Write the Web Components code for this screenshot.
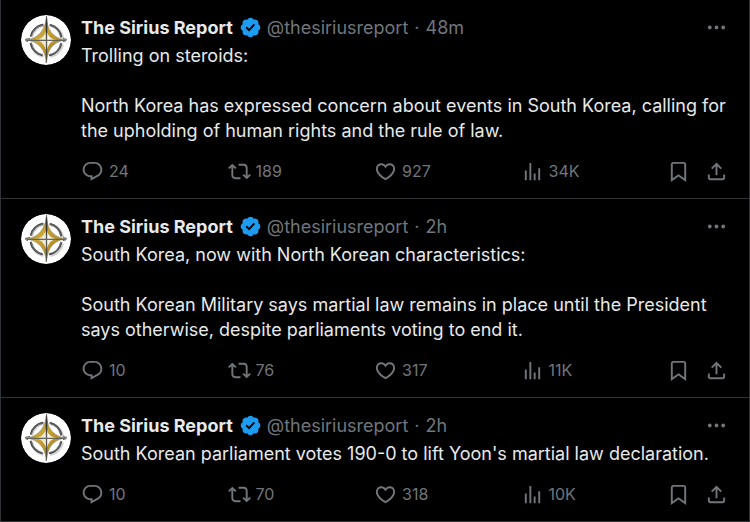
<!DOCTYPE html>
<html lang="en">
<head>
<meta charset="utf-8">
<title>The Sirius Report</title>
<style>
  html { background: #000; }
  body { margin: 0; background: #000; color: #e7e9ea; font: 18px/25px Inter, "Liberation Sans", sans-serif; }
</style>
</head>
<body>
<post-timeline>
  <post-card handle="@thesiriusreport" age="48m" replies="24" reposts="189" likes="927" views="34K">
    <span slot="name">The Sirius Report</span>
    <p>Trolling on steroids:</p>
    <p>North Korea has expressed concern about events in South Korea, calling for the upholding of human rights and the rule of law.</p>
  </post-card>
  <post-card handle="@thesiriusreport" age="2h" replies="10" reposts="76" likes="317" views="11K">
    <span slot="name">The Sirius Report</span>
    <p>South Korea, now with North Korean characteristics:</p>
    <p>South Korean Military says martial law remains in place until the President says otherwise, despite parliaments voting to end it.</p>
  </post-card>
  <post-card handle="@thesiriusreport" age="2h" replies="10" reposts="70" likes="318" views="10K">
    <span slot="name">The Sirius Report</span>
    <p>South Korean parliament votes 190-0 to lift Yoon's martial law declaration.</p>
  </post-card>
</post-timeline>

<script>
const ICONS = {
  reply: 'M1.751 10c0-4.42 3.584-8 8.005-8h4.366c4.49 0 8.129 3.64 8.129 8.13 0 2.96-1.607 5.68-4.196 7.11l-8.054 4.46v-3.69h-.067c-4.49.1-8.183-3.51-8.183-8.01zm8.005-6c-3.317 0-6.005 2.69-6.005 6 0 3.37 2.77 6.08 6.138 6.01l.351-.01h1.761v2.3l5.087-2.81c1.951-1.08 3.163-3.13 3.163-5.36 0-3.39-2.744-6.13-6.129-6.13H9.756z',
  repost: 'M4.5 3.88l4.432 4.14-1.364 1.46L5.5 7.55V16c0 1.1.896 2 2 2H13v2H7.5c-2.209 0-4-1.79-4-4V7.55L1.432 9.48.068 8.02 4.5 3.88zM16.5 6H11V4h5.5c2.209 0 4 1.79 4 4v8.45l2.068-1.93 1.364 1.46-4.432 4.14-4.432-4.14 1.364-1.46 2.068 1.93V8c0-1.1-.896-2-2-2z',
  like: 'M16.697 5.5c-1.222-.06-2.679.51-3.89 2.16l-.805 1.09-.806-1.09C9.984 6.01 8.526 5.44 7.304 5.5c-1.243.07-2.349.78-2.91 1.91-.552 1.12-.633 2.78.479 4.82 1.074 1.97 3.257 4.27 7.129 6.61 3.87-2.34 6.052-4.64 7.126-6.61 1.111-2.04 1.03-3.7.477-4.82-.561-1.13-1.666-1.84-2.908-1.91zm4.187 7.69c-1.351 2.48-4.001 5.12-8.379 7.67l-.503.3-.504-.3c-4.379-2.55-7.029-5.19-8.382-7.67-1.36-2.5-1.41-4.86-.514-6.67.887-1.79 2.647-2.91 4.601-3.01 1.651-.09 3.368.56 4.798 2.01 1.429-1.45 3.146-2.1 4.796-2.01 1.954.1 3.714 1.22 4.601 3.01.896 1.81.846 4.17-.514 6.67z',
  views: 'M8.75 21V3h2v18h-2zM18 21V8.5h2V21h-2zM4 21l.004-10h2L6 21H4zm9.248 0v-7h2v7h-2z',
  bookmark: 'M4 4.5C4 3.12 5.119 2 6.5 2h11C18.881 2 20 3.12 20 4.5v18.44l-8-5.71-8 5.71V4.5zM6.5 4c-.276 0-.5.22-.5.5v14.56l6-4.29 6 4.29V4.5c0-.28-.224-.5-.5-.5h-11z',
  share: 'M12 2.59l5.7 5.7-1.41 1.42L13 6.41V16h-2V6.41l-3.3 3.3-1.41-1.42L12 2.59zM21 15l-.02 3.51c0 1.38-1.12 2.49-2.5 2.49H5.5C4.11 21 3 19.88 3 18.5V15h2v3.5c0 .28.22.5.5.5h12.98c.28 0 .5-.22.5-.5L19 15h2z',
  more: 'M3 12c0-1.1.9-2 2-2s2 .9 2 2-.9 2-2 2-2-.9-2-2zm9 2c1.1 0 2-.9 2-2s-.9-2-2-2-2 .9-2 2 .9 2 2 2zm7 0c1.1 0 2-.9 2-2s-.9-2-2-2-2 .9-2 2 .9 2 2 2z'
};

class PostIcon extends HTMLElement {
  connectedCallback() {
    this.attachShadow({ mode: 'open' }).innerHTML = `
      <style>
        :host { display: block; width: 23px; height: 23px; flex: none; }
        svg { display: block; width: 100%; height: 100%; fill: currentColor; }
      </style>
      <svg viewBox="0 0 24 24" aria-hidden="true"><path d="${ICONS[this.getAttribute('name')]}"/></svg>`;
  }
}
customElements.define('post-icon', PostIcon);

class VerifiedBadge extends HTMLElement {
  connectedCallback() {
    this.attachShadow({ mode: 'open' }).innerHTML = `
      <style>
        :host { display: block; width: 23px; height: 23px; flex: none; }
        svg { display: block; width: 100%; height: 100%; fill: #1d9bf0; }
      </style>
      <svg viewBox="0 0 22 22" role="img" aria-label="Verified account"><path d="M20.396 11c-.018-.646-.215-1.275-.57-1.816-.354-.54-.852-.972-1.438-1.246.223-.607.27-1.264.14-1.897-.131-.634-.437-1.218-.882-1.687-.47-.445-1.053-.75-1.687-.882-.633-.13-1.29-.083-1.897.14-.273-.587-.704-1.086-1.245-1.44S11.647 1.62 11 1.604c-.646.017-1.273.213-1.813.568s-.969.854-1.24 1.44c-.608-.223-1.267-.272-1.902-.14-.635.13-1.22.436-1.69.882-.445.47-.749 1.055-.878 1.688-.13.633-.08 1.29.144 1.896-.587.274-1.087.705-1.443 1.245-.356.54-.555 1.17-.574 1.817.02.647.218 1.276.574 1.817.356.54.856.972 1.443 1.245-.224.606-.274 1.263-.144 1.896.13.634.433 1.218.877 1.688.47.443 1.054.747 1.687.878.633.132 1.29.084 1.897-.136.274.586.705 1.084 1.246 1.439.54.354 1.17.551 1.816.569.647-.016 1.276-.213 1.817-.567s.972-.854 1.245-1.44c.604.239 1.266.296 1.903.164.636-.132 1.22-.447 1.68-.907.46-.46.776-1.044.908-1.681s.075-1.299-.165-1.903c.586-.274 1.084-.705 1.439-1.246.354-.54.551-1.17.569-1.816zM9.662 14.85l-3.429-3.428 1.293-1.302 2.072 2.072 4.4-4.794 1.347 1.246z"/></svg>`;
  }
}
customElements.define('verified-badge', VerifiedBadge);

class SiriusAvatar extends HTMLElement {
  connectedCallback() {
    this.attachShadow({ mode: 'open' }).innerHTML = `
      <style>
        :host { display: block; width: 50px; height: 50px; flex: none; border-radius: 50%; overflow: hidden; }
        svg { display: block; width: 100%; height: 100%; }
      </style>
      <svg viewBox="0 0 50 50" role="img" aria-label="The Sirius Report">
        <defs>
          <linearGradient id="gold" x1="0" y1="0" x2="1" y2="1">
            <stop offset="0" stop-color="#7d6a34"/><stop offset=".38" stop-color="#c9a638"/>
            <stop offset=".6" stop-color="#b8942c"/><stop offset="1" stop-color="#8d7838"/>
          </linearGradient>
          <linearGradient id="shine" x1="0" y1="0" x2="1" y2="0">
            <stop offset="0" stop-color="#d8c98e"/><stop offset=".45" stop-color="#f2efe2"/>
            <stop offset=".55" stop-color="#fff"/><stop offset="1" stop-color="#e2d49c"/>
          </linearGradient>
        </defs>
        <circle cx="25" cy="25" r="25" fill="#fff"/>
        <g fill="none">
          <circle cx="26" cy="26" r="16" stroke="#d2d2d2" stroke-width="3" stroke-dasharray="18 7.133" stroke-dashoffset="-3.566"/>
          <circle cx="25" cy="25" r="15.500" stroke="#66686b" stroke-width="2" stroke-dasharray="18 6.347" stroke-dashoffset="-3.173"/>
          <circle cx="25" cy="25" r="16.200" stroke="#3c3e40" stroke-width=".8" stroke-dasharray="18 7.447" stroke-dashoffset="-3.723"/>
        </g>
        <path d="M25.500 3C26.500 14 31 23 45 25C31 27 27 35 25.500 47C23.500 35 19 27 5 25C19 23 23.500 14 25.500 3Z" fill="url(#gold)" stroke="#9b947d" stroke-width=".6"/>
        <path d="M25.500 14C26 20 29 23.500 35 25C29 26.500 26.500 31 25.500 37C24.500 31 21 26.500 15 25C21 23.500 24.500 20 25.500 14Z" fill="url(#shine)"/>
        <path d="M25.500 1C24.500 8 25 15 25.200 25V48C26 42 26 35 25.800 25C26 15 26.700 8 25.500 1Z" fill="#333" stroke="#3c3c3c" stroke-width=".5"/>
        <path d="M9 23.500L4.500 24.300Q4 26.300 7 26.500M42 23.500L45.500 24.300Q46 26.300 42 26.500" fill="none" stroke="#5d5d5d" stroke-width="1"/>
        <path d="M6 25.300H44" stroke="#66645c" stroke-width="1.200"/>
      </svg>`;
  }
}
customElements.define('sirius-avatar', SiriusAvatar);

class PostAction extends HTMLElement {
  connectedCallback() {
    const count = this.getAttribute('count');
    this.attachShadow({ mode: 'open' }).innerHTML = `
      <style>
        :host { display: block; color: #71767b; }
        button { display: flex; align-items: center; gap: 5px; height: 25px; margin: 0; padding: 0; border: 0; background: none; color: inherit; font: 16px/25px Inter, "Liberation Sans", sans-serif; cursor: pointer; }
      </style>
      <button type="button" aria-label="${this.getAttribute('label')}"><post-icon name="${this.getAttribute('icon')}"></post-icon>${count ? `<span>${count}</span>` : ''}</button>`;
  }
}
customElements.define('post-action', PostAction);

class PostCard extends HTMLElement {
  connectedCallback() {
    const a = name => this.getAttribute(name);
    this.attachShadow({ mode: 'open' }).innerHTML = `
      <style>
        :host { display: block; border-bottom: 1px solid #2f3336; }
        article { display: flex; gap: 10px; padding: 15px 21px 14px 20px; }
        .main { flex: 1; min-width: 0; }
        header { display: flex; align-items: center; height: 25px; color: #71767b; white-space: nowrap; }
        a { color: inherit; text-decoration: none; }
        .name { color: #e7e9ea; font-weight: 700; }
        verified-badge { margin: 0 5px 0 6px; }
        .dot { padding: 0 6px; }
        .more { margin: 0 0 0 auto; padding: 0; border: 0; background: none; color: inherit; cursor: pointer; }
        .text { display: flex; flex-direction: column; gap: 25px; margin-top: 3px; }
        ::slotted(p) { margin: 0; overflow-wrap: break-word; }
        footer { display: flex; margin-top: 16px; }
        footer > .metric { flex: 1; }
        .tools { display: flex; gap: 15px; }
      </style>
      <article>
        <sirius-avatar></sirius-avatar>
        <div class="main">
          <header>
            <a class="name" href="#profile"><slot name="name"></slot></a>
            <verified-badge></verified-badge>
            <a href="#profile">${a('handle')}</a><span class="dot">·</span><a href="#post"><time>${a('age')}</time></a>
            <button class="more" type="button" aria-label="More"><post-icon name="more"></post-icon></button>
          </header>
          <div class="text"><slot></slot></div>
          <footer>
            <post-action class="metric" icon="reply" label="Reply" count="${a('replies')}"></post-action>
            <post-action class="metric" icon="repost" label="Repost" count="${a('reposts')}"></post-action>
            <post-action class="metric" icon="like" label="Like" count="${a('likes')}"></post-action>
            <post-action class="metric" icon="views" label="Views" count="${a('views')}"></post-action>
            <div class="tools">
              <post-action icon="bookmark" label="Bookmark"></post-action>
              <post-action icon="share" label="Share"></post-action>
            </div>
          </footer>
        </div>
      </article>`;
  }
}
customElements.define('post-card', PostCard);

class PostTimeline extends HTMLElement {
  connectedCallback() {
    this.attachShadow({ mode: 'open' }).innerHTML = `
      <style>
        :host { display: block; border: solid #2f3336; border-width: 0 1px; background: #000; }
      </style>
      <main><slot></slot></main>`;
  }
}
customElements.define('post-timeline', PostTimeline);
</script>
</body>
</html>
